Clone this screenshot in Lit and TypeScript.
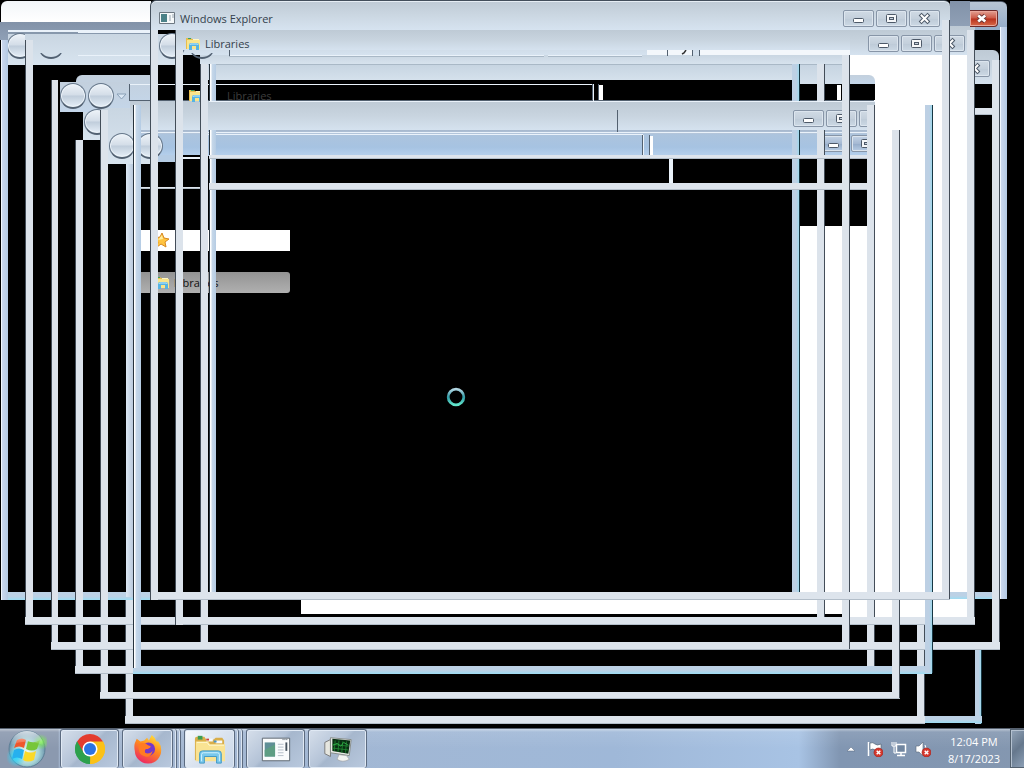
import { LitElement, html, css, svg } from "lit";
import { customElement, property } from "lit/decorators.js";
import { styleMap } from "lit/directives/style-map.js";

type Piece = [kind: string, x: number, y: number, w: number, h: number];

/* Panes, toolbars and title bars left behind by the windows */
const PANES: Piece[] = [
  ["white", 850, 55, 125, 562],
  ["white", 800, 226, 75, 388],
  ["white", 301, 600, 566, 14],
  ["glow", 1, 1, 150, 21],
  ["slate", 0, 22, 150, 18],
  ["steel", 8, 32, 142, 8],
  ["mist", 8, 34, 142, 31],
  ["hair", 8, 30, 142, 2],
  ["hair", 78, 32, 72, 1],
  ["hair", 78, 55, 72, 1],
  ["slate", 950, 1, 20, 25],
  ["cap-blue", 970, 1, 37, 29],
  ["cap round-right", 975, 50, 24, 34],
  ["rail-h", 975, 108, 17, 7],
  ["cap-mid round-left", 76, 75, 74, 33],
  ["cap-mid", 60, 82, 70, 30],
  ["mist", 83, 112, 18, 28],
  ["mist", 100, 108, 52, 56],
  ["mist", 158, 34, 18, 31],
  ["cap", 175, 26, 800, 29],
  ["mist", 200, 55, 650, 10],
  ["toolbar", 208, 64, 642, 16],
  ["toolbar", 800, 64, 42, 20],
  ["cap-mid round-right", 842, 75, 33, 9],
  ["black", 850, 84, 25, 16],
  ["hair", 129, 84, 464, 1],
  ["edge-v", 129, 84, 1, 17],
  ["edge-h", 129, 100, 745, 1],
  ["cap", 130, 101, 745, 29],
  ["steel-lt", 141, 130, 734, 4],
  ["band", 141, 134, 734, 22],
  ["hair", 141, 132, 734, 1],
  ["hair", 208, 134, 435, 1],
  ["band-lo", 158, 155, 17, 7],
  ["black", 183, 155, 17, 4],
  ["hair", 183, 157, 17, 2],
  ["black", 208, 159, 666, 67],
  ["rail-h", 141, 187, 60, 2],
  ["hair", 229, 55, 315, 1],
  ["hair-dk", 229, 56, 315, 1],
  ["hair", 548, 55, 94, 1],
  ["hair-dk", 548, 56, 94, 1],
  ["edge-v", 229, 50, 1, 6],
  ["hair-dk", 208, 64, 642, 1],
  ["soft", 647, 50, 45, 5],
  ["soft", 700, 50, 150, 5],
  ["edge-v", 667, 50, 1, 6],
  ["edge-v", 692, 50, 1, 6],
  ["edge-v", 699, 50, 1, 6],
  ["edge-v", 592, 84, 1, 22],
  ["hair", 593, 84, 1, 22],
  ["edge-v", 598, 84, 1, 16],
  ["white", 599, 85, 4, 15],
  ["white", 837, 85, 4, 15],
  ["edge-v", 642, 135, 1, 20],
  ["hair", 643, 135, 1, 20],
  ["edge-v", 649, 135, 1, 20],
  ["white", 650, 136, 3, 19],
  ["edge-v", 154, 110, 1, 22],
  ["white", 141, 230, 149, 21],
  ["row", 141, 272, 149, 21],
];

/* Frame edges, painted back to front */
const RAILS: Piece[] = [
  ["blue-h", 1, 592, 150, 8],
  ["blue-h", 950, 592, 57, 7],
  ["rail-v", 25, 40, 8, 585],
  ["blue-v", 1, 40, 7, 560],
  ["rail-v", 51, 80, 7, 570],
  ["rail-v", 75, 140, 8, 534],
  ["rail-v", 100, 110, 8, 589],
  ["steel-v", 126, 164, 7, 433],
  ["rail-v", 125, 600, 8, 124],
  ["rail-v end", 817, 64, 8, 553],
  ["blue-v end", 792, 64, 8, 528],
  ["rail-v end", 892, 130, 8, 569],
  ["rail-v end", 917, 625, 8, 99],
  ["rail-v end", 967, 30, 8, 595],
  ["rail-v end", 992, 60, 8, 590],
  ["blue-v", 1000, 27, 7, 572],
  ["blue-v end", 975, 650, 7, 74],
  ["rail-v", 200, 64, 8, 579],
  ["blue-v lit", 209, 64, 7, 528],
  ["cap", 209, 101, 666, 29],
  ["hair", 209, 101, 666, 1],
  ["edge-v", 617, 110, 1, 22],
  ["rail-h", 209, 155, 666, 4],
  ["rail-h", 209, 183, 666, 7],
  ["hair", 669, 159, 4, 24],
];

/* Edges that run over the title bars' buttons */
const OVER: Piece[] = [
  ["rail-v end", 867, 105, 8, 565],
  ["rail-h", 25, 617, 950, 8],
  ["rail-h", 51, 642, 949, 8],
  ["rail-h", 75, 666, 58, 8],
  ["rail-h", 100, 692, 800, 7],
  ["rail-h", 125, 716, 800, 8],
  ["blue-h", 925, 716, 57, 7],
  ["blue-h", 133, 666, 799, 8],
  ["blue-v lit", 133, 105, 8, 563],
  ["blue-v end", 925, 105, 8, 568],
  ["rail-v end", 892, 600, 8, 98],
  ["rail-v", 175, 30, 8, 595],
  ["rail-v end", 842, 55, 8, 594],
  ["rail-h", 150, 592, 800, 8],
  ["rail-v", 150, 20, 8, 580],
  ["rail-v end", 942, 10, 8, 589],
];

const ORBS: [number, number, string][] = [
  [20, 46, "cut"], [51, 46, "low"],
  [172, 46, ""], [202, 46, "low"],
  [73, 96, ""], [101, 96, ""],
  [97, 122, "cut"], [122, 146, ""], [150, 146, ""],
];

const place = (x: number, y: number, w?: number, h?: number) =>
  styleMap({
    left: `${x}px`,
    top: `${y}px`,
    ...(w ? { width: `${w}px` } : {}),
    ...(h ? { height: `${h}px` } : {}),
  });

const folder = html`<svg viewBox="0 0 16 16" aria-hidden="true">
  <path d="M1 3V2h5l1 1h7v10H1z" fill="#e8bd4c" />
  <path d="M2 4h13v9H2z" fill="#f8e58c" />
  <path d="M3 2h3v1H3z" fill="#3aa564" /><path d="M8 3h6v1H8z" fill="#fff7c4" />
  <path d="M4 14V9q0-2 2-2h6q2 0 2 2v5h-3v-4H7v4z" fill="#55b4e3" />
  <path d="M5 9q0-1 1-1h6q1 0 1 1" fill="none" stroke="#bdeaff" />
</svg>`;

@customElement("caption-buttons")
class CaptionButtons extends LitElement {
  @property() tone = "";
  static styles = css`
    :host { display: flex; }
    button {
      width: 31px; height: 17px; padding: 0; margin: 0; border: 1px solid #8795a7; border-radius: 2px;
      background: linear-gradient(#d0dae4, #c4d0dc 50%, #bdcad7 51%, #ccd9e5);
      box-shadow: inset 0 0 0 1px #dce5ee; display: block;
    }
    svg { display: block; width: 29px; height: 15px; }
    .deep button { background: linear-gradient(#c4d3e6, #a5b9d3 50%, #94abc9 51%, #b8cde5); }
    .group { display: flex; gap: 2px; }
  `;
  render() {
    return html`<div class="group ${this.tone}">
      <button aria-label="Minimize"><svg viewBox="0 0 29 15"><rect x="9.500" y="7.500" width="10" height="4" rx="1" fill="#fff" stroke="#4d5968" /></svg></button>
      <button aria-label="Maximize"><svg viewBox="0 0 29 15"><rect x="9.500" y="3.500" width="10" height="8" rx="1" fill="#f5f7f9" stroke="#4d5968" /><rect x="12.500" y="6.500" width="4" height="2" fill="#c8d2dd" stroke="#4d5968" /></svg></button>
      <button aria-label="Close"><svg viewBox="0 0 29 15"><path d="M11.500 4.500l6 6M17.500 4.500l-6 6" stroke="#4d5968" stroke-width="4" stroke-linecap="square" /><path d="M11.500 4.500l6 6M17.500 4.500l-6 6" stroke="#fff" stroke-width="2" stroke-linecap="square" /></svg></button>
    </div>`;
  }
}

@customElement("task-bar")
class TaskBar extends LitElement {
  static styles = css`
    :host { display: block; color: #fff; font: 11px/17px "Open Sans", "Noto Sans", sans-serif; }
    .bar {
      display: flex; height: 40px; box-sizing: border-box; border-top: 1px solid #56606e;
      background: linear-gradient(#ffffff70, #ffffff18 3px, #ffffff00 50%),
        linear-gradient(90deg, #8b99af 0 58px, #a5b7d0 60px, #9fb8d8 60%, #a8c3e4 78%, #8196b2 82%, #8497b0);
    }
    button { padding: 0; margin: 0; border: 0; background: none; font: inherit; display: grid; place-items: center; }
    .start { width: 60px; padding-right: 6px; }
    .start svg { width: 40px; height: 38px; }
    .apps { display: flex; gap: 3px; }
    .app {
      box-sizing: border-box; width: 59px; border: 1px solid #5c6b80; border-bottom: 0; border-radius: 3px;
      background: linear-gradient(135deg, #d6dfeb, #b4c3d7 45%, #a6b7cd 50%, #b9c9de);
      box-shadow: inset 0 0 0 1px #e0e9f4;
    }
    .app svg { width: 32px; height: 32px; }
    .stack { display: flex; width: 59px; }
    .stack .app { width: 51px; }
    .stack i { width: 4px; box-sizing: border-box; border-right: 1px solid #5c6b80; box-shadow: inset -1px 0 #dce6f2; border-radius: 0 3px 0 0; }
    .stack .open { background: linear-gradient(135deg, #f7fafd, #dae3ef 50%, #c9d7e9); }
    .fill { flex: 1; }
    .tray { display: flex; align-items: center; gap: 8px; padding-right: 8px; }
    .tray button { width: 16px; height: 16px; }
    .tray svg { width: 16px; height: 16px; }
    .time { text-align: center; width: 56px; display: block; margin-left: 7px; padding-top: 2px; }
    .peek { width: 14px; border: 1px solid #53616f; border-right: 0; box-shadow: inset 1px 1px #b4c1d0; background: linear-gradient(135deg, #93a4b8, #66788d 50%, #8c9fb5); }
  `;
  render() {
    const cross = svg`<circle cx="11.500" cy="11.500" r="4.500" fill="#d6382d" stroke="#9c1d18" stroke-width=".6"/><path d="M9.700 9.700l3.600 3.600M13.300 9.700l-3.600 3.600" stroke="#fff" stroke-width="1.500"/>`;
    return html`<div class="bar">
      <button class="start" aria-label="Start"><svg viewBox="0 0 40 38">
        <defs>
          <radialGradient id="orb" cx=".5" cy=".6" r=".55"><stop offset="0" stop-color="#f4faf0" /><stop offset=".6" stop-color="#a5d3d6" /><stop offset="1" stop-color="#5f86a3" /></radialGradient>
          <linearGradient id="shine" x1="0" y1="0" x2="0" y2="1"><stop offset="0" stop-color="#fff" stop-opacity=".75" /><stop offset="1" stop-color="#fff" stop-opacity=".05" /></linearGradient>
          <radialGradient id="warm"><stop offset="0" stop-color="#7cf04c" /><stop offset="1" stop-color="#7cf04c" stop-opacity="0" /></radialGradient>
          <radialGradient id="cool"><stop offset="0" stop-color="#25d8ff" /><stop offset="1" stop-color="#25d8ff" stop-opacity="0" /></radialGradient>
        </defs>
        <circle cx="20" cy="19" r="18" fill="url(#orb)" stroke="#5d7f96" />
        <circle cx="34" cy="12" r="8" fill="url(#warm)" /><circle cx="9" cy="27" r="10" fill="url(#cool)" />
        <path d="M10 10q5-3 9 0l-2 8q-5-3-10 0z" fill="#f0562b" />
        <path d="M21 11q6 3 12-1l-3 9q-5 3-11 0z" fill="#77c63a" />
        <path d="M7 20q5-3 10 0l-2 9q-5-3-10 0z" fill="#26b0ee" />
        <path d="M18 21q6 3 11 0l-2 9q-6 3-11 0z" fill="#fbd928" />
        <path d="M4 15a16 14 0 0132 0q-16-7-32 0z" fill="url(#shine)" />
      </svg></button>
      <div class="apps">
        <button class="app" aria-label="Chrome"><svg viewBox="0 0 34 34">
          <path d="M17 17L3.200 9A16 16 0 0130.800 9z" fill="#e33b2e" /><path d="M17 17L30.800 9A16 16 0 0117 33z" fill="#fbc116" />
          <path d="M17 17L17 33A16 16 0 013.200 9z" fill="#2da04c" /><path d="M17 9h13.800l-6.900 12z" fill="#fbc116" />
          <path d="M10 21L3.200 9 17 9z" fill="#e33b2e" /><path d="M3.200 9l7 12 7 4-.2 8A16 16 0 013.200 9z" fill="#2da04c" /><path d="M24 21l-7 12a16 16 0 0013.800-24z" fill="#fbc116" />
          <circle cx="17" cy="17" r="8" fill="#fff" /><circle cx="17" cy="17" r="6.400" fill="#2c73e2" /></svg></button>
        <div class="stack"><button class="app" aria-label="Firefox"><svg viewBox="0 0 34 34">
          <defs><linearGradient id="fox" x1=".8" y1="0" x2=".3" y2="1"><stop offset="0" stop-color="#ffe53c" /><stop offset=".45" stop-color="#ff8a1f" /><stop offset="1" stop-color="#ec2466" /></linearGradient></defs>
          <path d="M3 11l2-5 4 3 4-1 3-3 2 3 3-6q4 3 5 7l2 0q3 4 3 9a14 14 0 01-28 1q-1-5 0-8z" fill="url(#fox)" />
          <circle cx="17.500" cy="17" r="7" fill="#7438ca" />
          <path d="M7 12q6-3 10 1l3 1q-1 3-5 3-2 1-1 4 4 2 8-2-2 7-8 6-8-1-7-13z" fill="#ff7b22" /></svg></button><i></i><i></i></div>
        <div class="stack"><button class="app open" aria-label="Libraries"><svg viewBox="0 0 34 34">
          <path d="M1 6q0-2 2-2h8l2 3h8l2-2h7l2 3v21H1z" fill="#d9ae49" />
          <path d="M4 3h5v4H4z" fill="#3c9d53" /><path d="M13 6h7v3h-7z" fill="#f7fafc" /><path d="M13 6h3v2h-3z" fill="#cf4437" /><path d="M23 8h7v3h-7z" fill="#f7fafc" /><path d="M21 8h3v2h-3z" fill="#4795cf" />
          <path d="M2 9h13l2 3h16v18H2z" fill="#f9e393" /><path d="M3 10h11l2 3h16" fill="none" stroke="#fff8cf" />
          <path d="M6 32V22q0-3 3-3h17q3 0 3 3v10h-5v-7H11v7z" fill="#79c8ec" stroke="#3c96c4" /><path d="M8 30v-7q0-2 2-2h15q2 0 2 2v7" fill="none" stroke="#d1f2ff" /></svg></button><i></i><i></i></div>
        <button class="app" aria-label="Windows Explorer"><svg viewBox="0 0 34 34">
          <path d="M2.500 5.500h29v24h-29z" fill="#fafcfd" stroke="#59636d" /><path d="M5 10h11v15H5z" fill="#5f8f97" /><path d="M5 18l11-6v13H5z" fill="#5d9d83" />
          <path d="M19 12h6M19 15h6M19 18h6M19 21h6M19 24h6" stroke="#b1bcc6" /><path d="M28 10v9" stroke="#46535f" stroke-width="2" /><path d="M24 7h6" stroke="#44515e" stroke-dasharray="1 1" /></svg></button>
        <button class="app" aria-label="Task Manager"><svg viewBox="0 0 34 34">
          <path d="M3 10l6-3v18l-6-3z" fill="#e6e6df" stroke="#777" /><path d="M9 5l22 2-2 17-20-3z" fill="#e9ece8" stroke="#858b88" />
          <path d="M11 6l19 2-2 14-17-3z" fill="#092f13" /><path d="M14 8l-1 11M18 8l-1 12M22 9l-1 12M26 9l-1 12M11 12l17 2M11 16l17 2" stroke="#239335" stroke-width=".8" /><path d="M12 13l4-2 4 3 3-4 5 3" fill="none" stroke="#2fae48" />
          <path d="M18 23l8 1 3 4q-7 4-13 0z" fill="#f3f4f3" stroke="#999" stroke-width=".6" /></svg></button>
      </div>
      <div class="fill"></div>
      <div class="tray">
        <button aria-label="Show hidden icons"><svg viewBox="0 0 16 16"><path d="M4 10l4-4 4 4z" fill="#fff" stroke="#56677c" stroke-width=".5" /></svg></button>
        <button aria-label="Action Center"><svg viewBox="0 0 16 16"><path d="M1.500 1v14" stroke="#fff" stroke-width="1.500" /><path d="M3 2q3-1 5 1t6 0v6q-4 2-6 0t-5 0z" fill="#fff" stroke="#4c5a6a" stroke-width=".6" />${cross}</svg></button>
        <button aria-label="Network"><svg viewBox="0 0 16 16"><path d="M5.500 3.500h9v8h-9z" fill="#7186a0" stroke="#fff" stroke-width="1.500" /><path d="M6 14.500h8M10 12v2" stroke="#fff" stroke-width="1.500" /><path d="M1 1v4h4V1M3 1v3M3 5v7h2" fill="none" stroke="#fff" /></svg></button>
        <button aria-label="Volume muted"><svg viewBox="0 0 16 16"><path d="M1 5h3l4-4v14l-4-4H1z" fill="#fff" stroke="#5a6878" stroke-width=".6" /><path d="M10 4q2 3 0 6" stroke="#fff" fill="none" />${cross}</svg></button>
        <time class="time">12:04 PM<br />8/17/2023</time>
      </div>
      <button class="peek" aria-label="Show desktop"></button>
    </div>`;
  }
}

@customElement("app-root")
class AppRoot extends LitElement {
  static styles = css`
    :host { display: flex; flex-direction: column; min-height: 100vh; background: #000; font: 11px/16px "Open Sans", "Noto Sans", sans-serif; }
    .desktop { position: relative; flex: 1; overflow: hidden; }
    .piece, .orb, .label, .icon, .controls, .close, .busy, .arrow { position: absolute; box-sizing: border-box; }
    .black { background: #000; }
    .white { background: #fff; }
    .soft { background: #f3f7fb; }
    .glow { background: linear-gradient(#f2f6f9, #fff); border-radius: 6px 0 0 0; }
    .slate { background: linear-gradient(#8292a8, #8fa0b6); }
    .steel { background: #8798ac; }
    .steel-lt { background: linear-gradient(#a7b8cd, #b5c7dc); }
    .mist { background: linear-gradient(#c9d6e2, #d8e4ef); }
    .hair { background: #eaf2fa; }
    .hair-dk { background: #a9b8c6; }
    .edge-v, .edge-h { background: #536170; }
    .cap { background: linear-gradient(#becad5, #c8d4df 50%, #d5e2ef); }
    .cap-mid { background: linear-gradient(#c3d0dd, #c4d6ea); }
    .cap-blue { background: linear-gradient(#b7c4d3, #93acca); border-top: 1px solid #4e5968; border-radius: 0 6px 0 0; }
    .round-left { border-radius: 6px 0 0 0; }
    .round-right { border-radius: 0 6px 0 0; }
    .toolbar { background: linear-gradient(#c6d4e1, #d5e1ec); }
    .band { background: linear-gradient(#adc4dd, #a6c3e2 60%, #b5d0ec); }
    .band-lo { background: #b5cce4; }
    .rail-v { background: #dce3eb; border-left: 1px solid #434d58; }
    .rail-v.end { border-left: 0; border-right: 1px solid #434d58; }
    .rail-h { background: #dde4ec; box-shadow: inset 0 -1px #b3bec9; }
    .steel-v { background: linear-gradient(90deg, #dde9f5, #bacadd); }
    .blue-v { background: linear-gradient(90deg, #cbd8ee, #b3c9e3); border-left: 1px solid #f1f8ff; }
    .blue-v.end { background: linear-gradient(90deg, #bdd0e4 60%, #9fd8ed); border-left: 0; border-right: 1px solid #173743; }
    .blue-v.lit { background: linear-gradient(90deg, #fff 1px, #c7d8e9 2px, #b5cce4); border-left: 1px solid #28343e; }
    .blue-h { background: linear-gradient(#bcd1e5 55%, #9ddcf3); }
    .row { background: linear-gradient(#939393, #b0b0b0); border-radius: 0 3px 3px 0; }
    .title { background: linear-gradient(#bfcad5, #cbd7e2 50%, #d6e3f0); border-top: 1px solid #434e5b; border-left: 1px solid #434e5b; border-radius: 6px 6px 0 0; box-shadow: inset 0 1px #e6edf4; }
    .orb { width: 26px; height: 26px; border: 1px solid #66778a; border-bottom: 2px solid #526172; border-radius: 50%; background: linear-gradient(#eef3f8, #d3dde8 48%, #c0cddb 52%, #e6eff8); box-shadow: inset 0 0 0 1px #edf4fa; }
    .orb.low { clip-path: inset(20px 0 0 0); background: none; box-shadow: none; }
    .orb.cut { clip-path: inset(0 8px 0 0); }
    .label { color: #333f4c; white-space: nowrap; }
    .label.dim { color: #3d3d3d; }
    .label.ink { color: #111; }
    .icon { width: 16px; height: 16px; }
    .icon svg, .busy svg, .arrow svg { display: block; width: 100%; height: 100%; }
    .close { padding: 0; border: 1px solid #6e2a2a; border-left: 0; border-radius: 0 2px 4px 0; background: linear-gradient(#e2a093, #cd5946 48%, #b7301d 52%, #d96a4a); box-shadow: inset 0 0 0 1px #eaa79b; }
    .close svg { display: block; width: 100%; height: 100%; }
    .controls.cut-a { clip-path: inset(0 16px 0 0); }
    .controls.cut-b { clip-path: inset(0 48px 0 7px); }
    .controls.cut-c { clip-path: inset(0 0 0 82px); }
  `;

  private pieces(list: Piece[]) {
    return list.map(([kind, x, y, w, h]) => html`<div class="piece ${kind}" style=${place(x, y, w, h)}></div>`);
  }

  render() {
    return html`
      <main class="desktop">
        ${this.pieces(PANES)}
        ${ORBS.map(([x, y, cut]) => html`<div class="orb ${cut}" style=${place(x - 13, y - 13)}></div>`)}
        <div class="arrow" style=${place(116, 93, 11, 7)}><svg viewBox="0 0 11 7"><path d="M1 1h9L5.500 6z" fill="#dbe8f5" stroke="#8aa0b7" /></svg></div>
        <div class="arrow" style=${place(680, 50, 8, 5)}><svg viewBox="0 0 8 5"><path d="M2 4l2-1 2-3" fill="none" stroke="#333" stroke-width="1.500" /></svg></div>
        <caption-buttons class="controls cut-c" style=${place(893, 60)}></caption-buttons>
        <div class="icon" style=${place(154, 232)}><svg viewBox="0 0 16 16"><path d="M8 1l2 5 5 1-4 3 1 5-5-3-4 3 1-5-3-4 5-1z" fill="#ffc440" stroke="#d88820" /><path d="M8 3l1 4-5 1z" fill="#ffed9e" /></svg></div>
        <div class="icon" style=${place(154, 275)}>${folder}</div>
        <div class="label ink" style=${place(174, 275)}>Libraries</div>
        <div class="icon" style=${place(188, 88)}>${folder}</div>
        <div class="label dim" style=${place(227, 88)}>Libraries</div>
        ${this.pieces(RAILS)}
        <caption-buttons class="controls cut-a" style=${place(793, 110)}></caption-buttons>
        <caption-buttons class="controls cut-b" tone="deep" style=${place(818, 135)}></caption-buttons>
        ${this.pieces(OVER)}
        <div class="piece title" style=${place(150, 0, 800, 30)}></div>
        <div class="piece cap" style=${place(176, 30, 674, 20)}></div>
        <div class="piece cap" style=${place(850, 30, 92, 25)}></div>
        <div class="icon" style=${place(159, 10)}><svg viewBox="0 0 16 16"><path d="M.500 2.500h15v11H.500z" fill="#f6f9fa" stroke="#6d7882" /><path d="M2 4h6v8H2z" fill="#4c8288" /><path d="M10 6h2M10 8h2M10 10h2M14 4v4" stroke="#97a4af" /></svg></div>
        <div class="label" style=${place(180, 11)}>Windows Explorer</div>
        <div class="icon" style=${place(185, 36)}>${folder}</div>
        <div class="label" style=${place(205, 36)}>Libraries</div>
        <caption-buttons class="controls" style=${place(843, 10)}></caption-buttons>
        <caption-buttons class="controls" style=${place(868, 35)}></caption-buttons>
        ${this.pieces([["rail-v end", 942, 20, 8, 579]])}
        <button class="close" aria-label="Close" style=${place(970, 10, 28, 17)}><svg viewBox="0 0 28 17"><path d="M8 5l8 7M16 5l-8 7" stroke="#643434" stroke-width="5" /><path d="M8 5l8 7M16 5l-8 7" stroke="#fff" stroke-width="3" /></svg></button>
        <div class="busy" role="status" aria-label="Busy" style=${place(446, 387, 20, 20)}><svg viewBox="0 0 20 20">
          <defs><linearGradient id="ring" x1="0" y1="0" x2="0" y2="1"><stop offset="0" stop-color="#b2d5e2" /><stop offset=".5" stop-color="#2f99a5" /><stop offset="1" stop-color="#62e5cb" /></linearGradient></defs>
          <circle cx="10" cy="10" r="7.800" fill="none" stroke="url(#ring)" stroke-width="2.800" /></svg></div>
      </main>
      <task-bar></task-bar>
    `;
  }
}
